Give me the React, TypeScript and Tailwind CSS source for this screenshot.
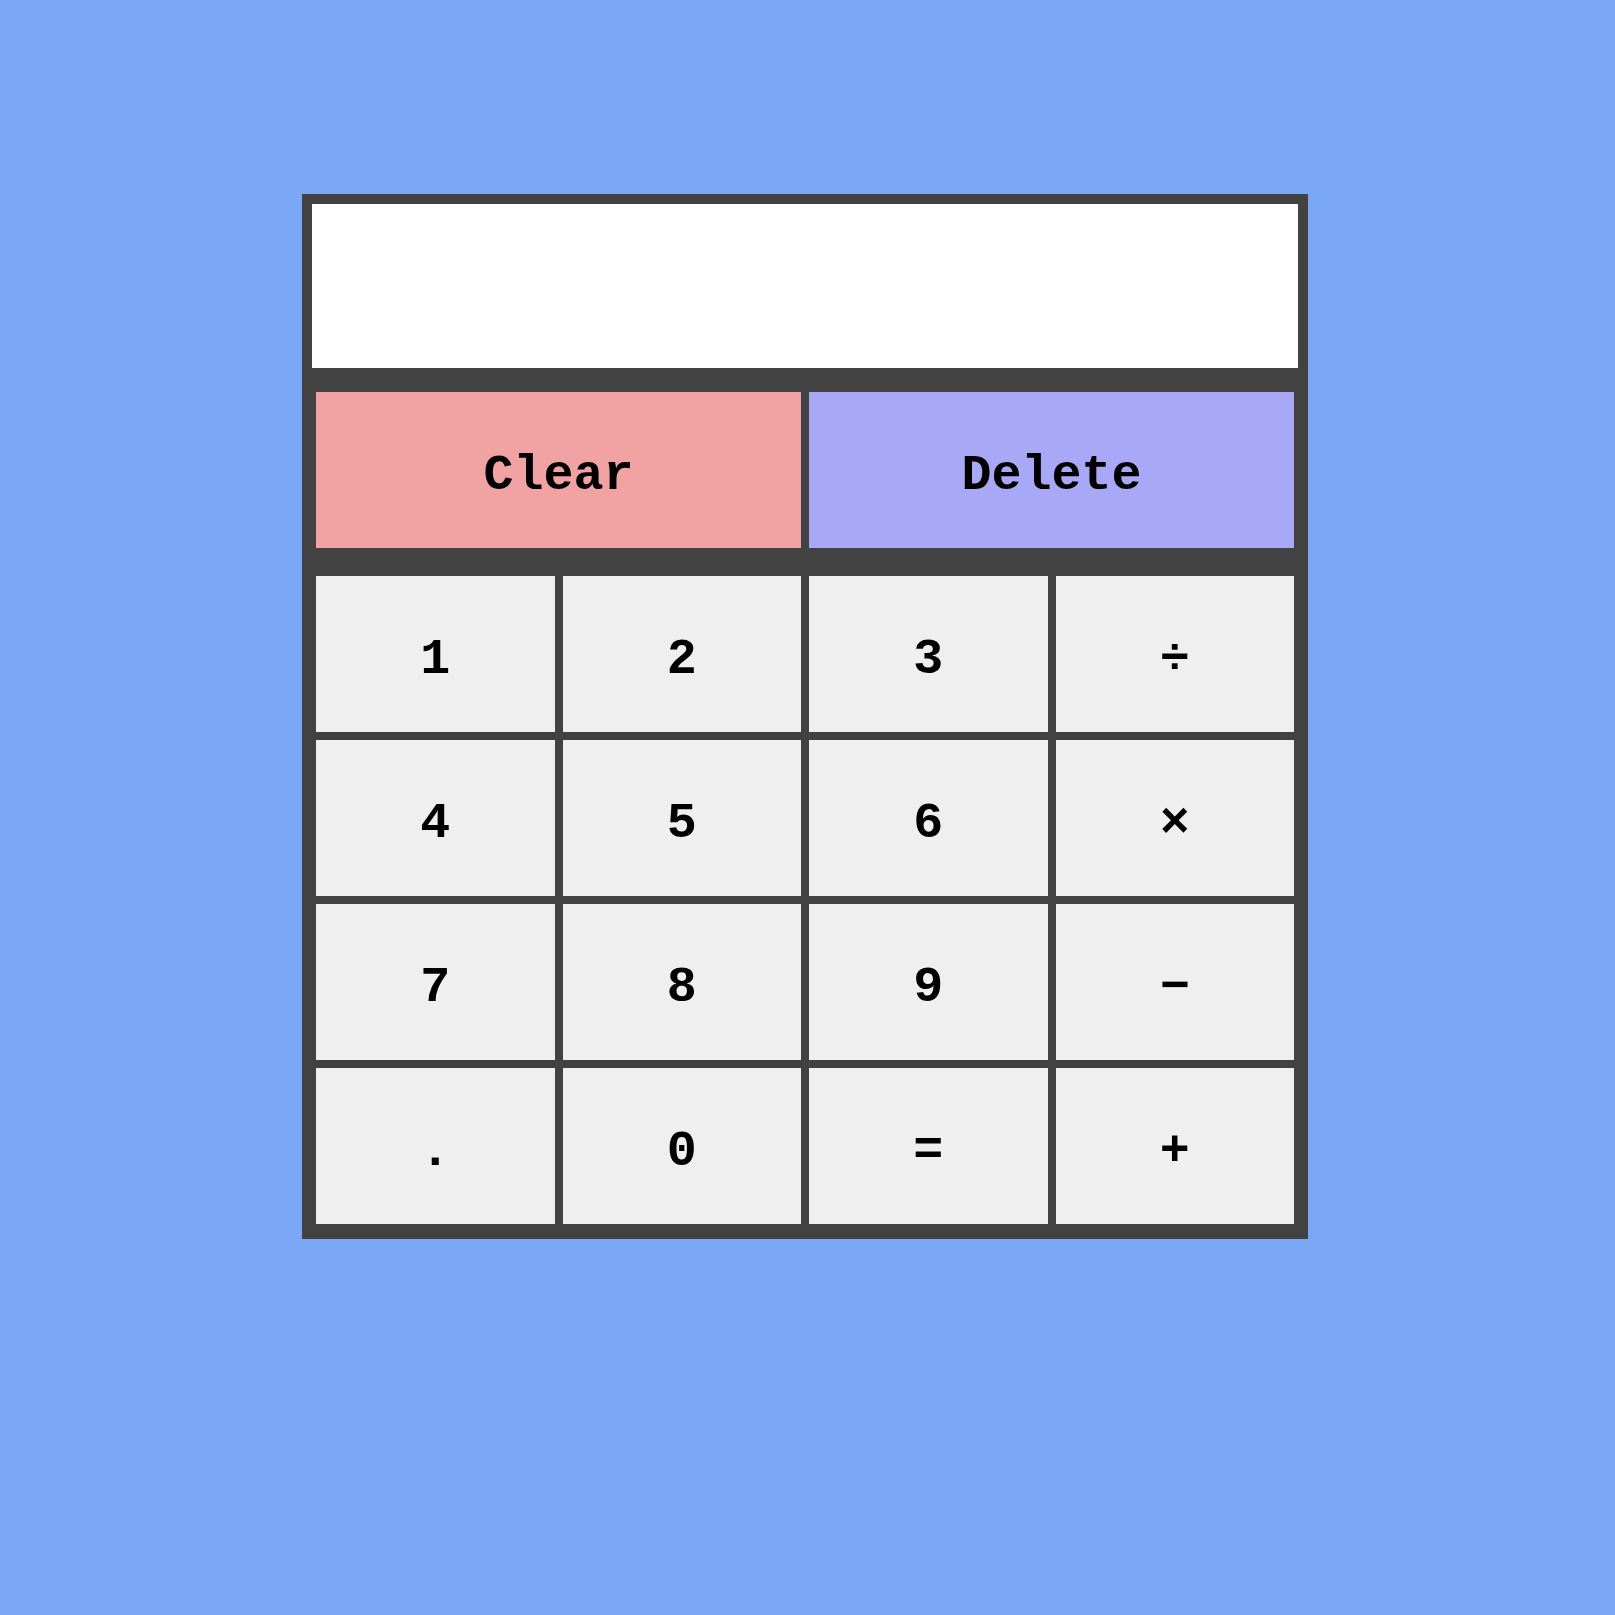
import React from 'react';

const keys = ['1', '2', '3', '÷', '4', '5', '6', '×', '7', '8', '9', '−', '.', '0', '=', '+'];

const App: React.FC = () => {
  return (
    <div className="min-h-screen bg-[#7ba7f7] pt-[194px] pl-[302px]">
      <div
        className="w-[1006px] border-[10px] border-[#424242] bg-[#424242] text-black font-bold"
        style={{ fontFamily: '"Liberation Mono", "Courier New", monospace' }}
      >
        <div className="h-[164px] bg-white"></div>
        <div className="px-[4px] pt-[24px] pb-[5px]">
          <div className="grid grid-cols-2 gap-[8px]">
            <button className="h-[156px] pt-[10px] bg-[#f1a3a3] text-[50px]">Clear</button>
            <button className="h-[156px] pt-[10px] bg-[#a8a8f7] text-[50px]">Delete</button>
          </div>
          <div className="mt-[28px] grid grid-cols-4 gap-[8px]">
            {keys.map((k) => (
              <button key={k} className="h-[156px] pt-[10px] bg-[#efefef] text-[50px]">
                {k}
              </button>
            ))}
          </div>
        </div>
      </div>
    </div>
  );
};

export default App;
